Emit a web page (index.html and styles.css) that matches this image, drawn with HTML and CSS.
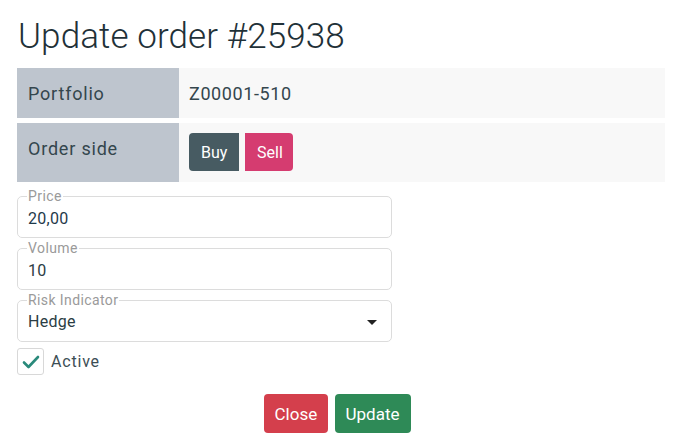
FILE: index.html
```html
<!DOCTYPE html>
<html>
<head>
<meta charset="utf-8">
<link rel="stylesheet" href="styles.css">
</head>
<body>
<div class="dialog">
  <h1 class="title">Update order #25938</h1>
  <div class="info">
    <div class="row">
      <div class="label">Portfolio</div>
      <div class="value">Z00001-510</div>
    </div>
    <div class="row row-tall">
      <div class="label">Order side</div>
      <div class="value">
        <div class="side-group">
          <button class="side side-buy">Buy</button>
          <button class="side side-sell">Sell</button>
        </div>
      </div>
    </div>
  </div>
  <div class="fields">
    <fieldset class="field">
      <legend>Price</legend>
      <div class="field-value price">20,00</div>
    </fieldset>
    <fieldset class="field">
      <legend>Volume</legend>
      <div class="field-value">10</div>
    </fieldset>
    <fieldset class="field">
      <legend>Risk Indicator</legend>
      <div class="field-value select">
        <span>Hedge</span>
        <svg class="caret" width="10" height="5" viewBox="0 0 10 5"><path d="M0 0H10L5 5Z" fill="#222"/></svg>
      </div>
    </fieldset>
    <label class="check">
      <span class="box"><svg width="18" height="14" viewBox="0 0 18 14"><path d="M2 7.5L6.5 12L16 2" fill="none" stroke="#2a8a7b" stroke-width="2.6" stroke-linecap="round" stroke-linejoin="round"/></svg></span>
      <span class="check-label">Active</span>
    </label>
  </div>
  <div class="actions">
    <button class="btn btn-close">Close</button>
    <button class="btn btn-update">Update</button>
  </div>
</div>
</body>
</html>
```

FILE: styles.css
```css
* { box-sizing: border-box; }
html, body { margin: 0; padding: 0; background: #fff; }
body {
  font-family: "Roboto", "Liberation Sans", sans-serif;
  color: #2b3d44;
}
.dialog {
  width: 677px;
  padding: 14px 12px 0 17px;
}
.title {
  margin: 0 0 8px 1px;
  font-weight: 300;
  font-size: 35px;
  line-height: 46px;
  letter-spacing: 0.1px;
  color: #1f3138;
}
.info {
  display: flex;
  flex-direction: column;
  gap: 5px;
}
.row {
  display: flex;
  height: 50px;
}
.row-tall { height: 59px; }
.label {
  width: 162px;
  background: #bec5ce;
  padding: 15px 11px 0;
  font-size: 18px;
  letter-spacing: 0.8px;
  font-weight: 400;
  color: #34464d;
}
.value {
  flex: 1;
  background: #f8f8f8;
  padding: 15px 10px 0;
  font-size: 18px;
  letter-spacing: 0.6px;
  color: #34464d;
}
.row-tall .value { padding-top: 10px; }
.side-group { display: flex; gap: 6px; }
.side {
  border: none;
  height: 38px;
  font-family: "Roboto", "Liberation Sans", sans-serif;
  font-size: 16px;
  color: #fff;
  padding: 0 12px;
}
.side-buy { background: #475b62; border-radius: 4px 0 0 4px; width: 50px; }
.side-sell { background: #d53c70; border-radius: 0 4px 4px 0; width: 48px; }
.fields {
  margin-top: 7px;
  width: 375px;
  display: flex;
  flex-direction: column;
  gap: 3px;
}
.field {
  margin: 0;
  border: 1px solid #dcdcdc;
  border-radius: 5px;
  padding: 0 10px 0;
  min-width: 0;
  height: 49px;
}
.field legend {
  padding: 0 1px;
  margin-left: -1px;
  font-size: 14px;
  line-height: 14px;
  color: #9a9a9a;
  letter-spacing: 0.4px;
}
.field-value {
  font-size: 16px;
  line-height: 24px;
  padding-top: 4px;
  color: #2b3d44;
  letter-spacing: 0.3px;
}
.price { color: #1f3a4a; }
.select {
  display: flex;
  justify-content: space-between;
  align-items: center;
  padding-right: 4px;
  padding-top: 3px;
}
.check {
  display: flex;
  align-items: center;
  gap: 7px;
  margin-top: 3px;
}
.box {
  width: 27px;
  height: 27px;
  border: 1px solid #d8d8d8;
  border-radius: 3px;
  display: flex;
  align-items: center;
  justify-content: center;
}
.check-label {
  font-size: 16px;
  letter-spacing: 0.8px;
  color: #3c4e55;
}
.actions {
  display: flex;
  justify-content: center;
  gap: 7px;
  margin-top: 19px;
  padding-right: 8px;
}
.btn {
  border: none;
  height: 39px;
  border-radius: 4px;
  color: #fff;
  font-family: "Roboto", "Liberation Sans", sans-serif;
  font-size: 17px;
  padding: 0 11px;
}
.btn-close { background: #d43f4c; width: 64px; }
.btn-update { background: #2e8a57; width: 76px; }
```
